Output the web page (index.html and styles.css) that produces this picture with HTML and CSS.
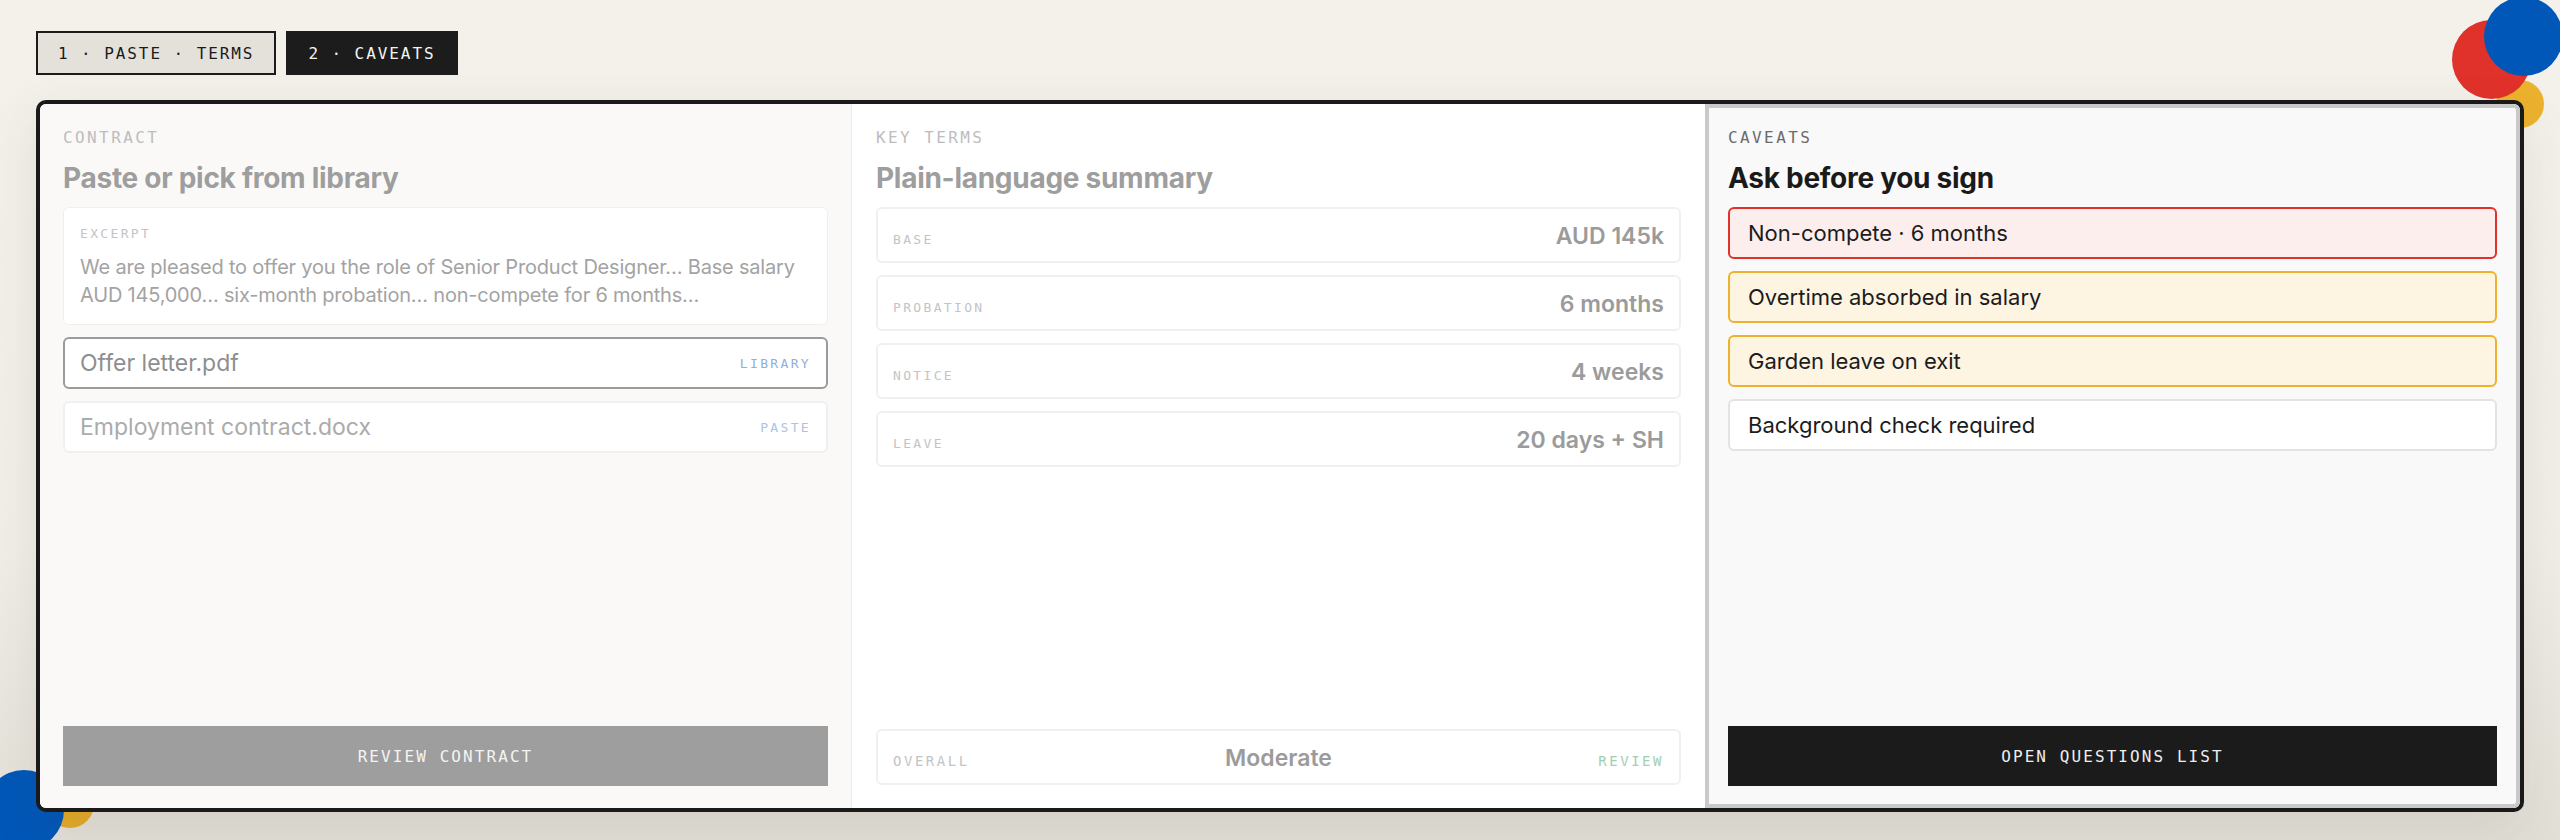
FILE: index.html
```html
<!DOCTYPE html>
<html lang="en">
  <head>
    <meta charset="utf-8">
    <title>Contract review · caveats</title>
    <link rel="stylesheet" href="styles.css">
  </head>
  <body>
    <!-- decorative dots, behind the board -->
    <span class="dot dot-yellow dot-tr-yellow"></span>
    <span class="dot dot-red dot-tr-red"></span>
    <span class="dot dot-blue dot-tr-blue"></span>
    <span class="dot dot-yellow dot-bl-yellow"></span>
    <span class="dot dot-blue dot-bl-blue"></span>

    <nav class="steps">
      <button class="step">1 · PASTE · TERMS</button>
      <button class="step step-current">2 · CAVEATS</button>
    </nav>

    <main class="board">
      <section class="pane pane-contract">
        <div class="eyebrow">CONTRACT</div>
        <h2 class="pane-title">Paste or pick from library</h2>
        <div class="stack">
          <div class="excerpt">
            <div class="tiny-label">EXCERPT</div>
            <p>We are pleased to offer you the role of Senior Product Designer… Base salary<br>AUD 145,000… six-month probation… non-compete for 6 months…</p>
          </div>
          <div class="file file-picked">
            <span>Offer letter.pdf</span>
            <span class="file-src">LIBRARY</span>
          </div>
          <div class="file">
            <span>Employment contract.docx</span>
            <span class="file-src">PASTE</span>
          </div>
        </div>
        <button class="action action-muted">REVIEW CONTRACT</button>
      </section>

      <section class="pane pane-terms">
        <div class="eyebrow">KEY TERMS</div>
        <h2 class="pane-title">Plain-language summary</h2>
        <div class="stack">
          <div class="term"><span class="tiny-label">BASE</span><span class="term-value">AUD 145k</span></div>
          <div class="term"><span class="tiny-label">PROBATION</span><span class="term-value">6 months</span></div>
          <div class="term"><span class="tiny-label">NOTICE</span><span class="term-value">4 weeks</span></div>
          <div class="term"><span class="tiny-label">LEAVE</span><span class="term-value">20 days + SH</span></div>
        </div>
        <div class="term overall">
          <span class="overall-label">OVERALL</span>
          <span class="term-value">Moderate</span>
          <span class="overall-label overall-flag">REVIEW</span>
        </div>
      </section>

      <section class="pane pane-caveats">
        <div class="eyebrow">CAVEATS</div>
        <h2 class="pane-title">Ask before you sign</h2>
        <div class="stack">
          <div class="caveat caveat-high">Non-compete · 6 months</div>
          <div class="caveat caveat-mid">Overtime absorbed in salary</div>
          <div class="caveat caveat-mid">Garden leave on exit</div>
          <div class="caveat caveat-low">Background check required</div>
        </div>
        <button class="action action-dark">OPEN QUESTIONS LIST</button>
      </section>
    </main>
  </body>
</html>
```

FILE: styles.css
```css
body {
  margin: 0;
  height: 100vh;
  box-sizing: border-box;
  position: relative;
  overflow: hidden;
  display: flex;
  flex-direction: column;
  gap: 25px;
  padding: 31px 36px 28px;
  background: linear-gradient(#f4f1eb, #f1eee8 65%, #e2dfd7);
  font-family: Inter, "Liberation Sans", sans-serif;
  color: #1b1b1b;
}

/* dots */
.dot {
  position: absolute;
  border-radius: 50%;
  z-index: 0;
}
.dot-blue { background: #0057b8; }
.dot-red { background: #e0322b; }
.dot-yellow { background: #ecb22e; }
.dot-tr-yellow { left: 2496px; top: 80px; width: 48px; height: 48px; }
.dot-tr-red { left: 2452px; top: 20px; width: 79px; height: 79px; }
.dot-tr-blue { left: 2484px; top: -3px; width: 79px; height: 79px; }
.dot-bl-yellow { left: 46px; top: 780px; width: 48px; height: 48px; background: #e3a92a; }
.dot-bl-blue { left: -16px; top: 770px; width: 80px; height: 80px; }

/* step tabs */
.steps {
  display: flex;
  gap: 10px;
  position: relative;
  z-index: 1;
}
.step {
  height: 44px;
  box-sizing: border-box;
  padding: 0 20px;
  border: 2px solid #1b1b1b;
  background: #e4e1db;
  color: #1b1b1b;
  font: 16px "DejaVu Sans Mono", monospace;
  letter-spacing: 0.12em;
}
.step-current {
  background: #1c1c1c;
  border-color: #1c1c1c;
  color: #f3f3f3;
}

/* board */
.board {
  flex: 1;
  position: relative;
  z-index: 1;
  display: grid;
  grid-template-columns: 812fr 853fr 815fr;
  border: 4px solid #1a1a1a;
  border-radius: 10px;
  overflow: hidden;
  background: #fff;
  box-shadow: 0 18px 50px rgba(70, 60, 40, 0.1);
}
.pane {
  display: flex;
  flex-direction: column;
  min-width: 0;
  padding: 24px 23px 22px;
}
.pane-contract {
  background: #faf9f7;
  border-right: 1px solid #ececec;
}
.pane-terms {
  background: #fff;
  padding: 24px 24px 23px;
}
.pane-caveats {
  background: #f9f9f9;
  border: 4px solid #c9c9c9;
  border-radius: 0 6px 6px 0;
  padding: 20px 19px 18px;
}

.eyebrow {
  font: 16px/20px "DejaVu Sans Mono", monospace;
  letter-spacing: 0.15em;
  color: #bdbdbd;
  margin-bottom: 12px;
}
.pane-caveats .eyebrow {
  color: #6b6b6b;
}
.pane-title {
  margin: 0 0 11px;
  font-size: 28px;
  line-height: 36px;
  font-weight: 700;
  letter-spacing: -0.01em;
  color: #9e9e9e;
}
.pane-caveats .pane-title {
  color: #1a1a1a;
}

.stack {
  display: flex;
  flex-direction: column;
  gap: 12px;
}
.tiny-label {
  font: 13px/16px "DejaVu Sans Mono", monospace;
  letter-spacing: 0.18em;
  color: #c4c4c4;
}

/* contract pane */
.excerpt {
  background: #fff;
  border: 1px solid #efefef;
  border-radius: 6px;
  padding: 18px 16px 15px;
}
.excerpt .tiny-label {
  margin-bottom: 11px;
}
.excerpt p {
  margin: 0;
  font-size: 20px;
  line-height: 28px;
  letter-spacing: -0.01em;
  color: #a3a3a3;
}
.file {
  height: 52px;
  box-sizing: border-box;
  display: flex;
  align-items: center;
  justify-content: space-between;
  padding: 0 15px;
  border: 2px solid #f0f0f0;
  border-radius: 6px;
  background: #fff;
  font-size: 23px;
  color: #ababab;
}
.file-picked {
  border-color: #9b9b9b;
  color: #8e8e8e;
}
.file-src {
  font: 13px "DejaVu Sans Mono", monospace;
  letter-spacing: 0.18em;
  color: #a9c4e6;
}
.file-picked .file-src {
  color: #8fb0d8;
}

/* terms pane */
.term {
  height: 56px;
  box-sizing: border-box;
  display: flex;
  align-items: baseline;
  justify-content: space-between;
  padding: 13px 15px 0;
  border: 2px solid #f0f0f0;
  border-radius: 6px;
  background: #fff;
}
.term-value {
  font-size: 23px;
  line-height: 28px;
  font-weight: 600;
  color: #9b9b9b;
}
.overall {
  margin-top: auto;
}
.overall-label {
  font: 14px "DejaVu Sans Mono", monospace;
  letter-spacing: 0.18em;
  color: #c4c4c4;
  width: 120px;
}
.overall-flag {
  color: #a4ceb0;
  text-align: right;
}

/* caveats pane */
.caveat {
  height: 52px;
  box-sizing: border-box;
  display: flex;
  align-items: center;
  padding: 0 18px;
  border: 2px solid #e3e3e3;
  border-radius: 6px;
  background: #fff;
  font-size: 22px;
  color: #1c1c1c;
}
.caveat-high {
  border-color: #e0322b;
  background: #fdeeee;
}
.caveat-mid {
  border-color: #edb32e;
  background: #fdf4e2;
}

/* bottom buttons */
.action {
  margin-top: auto;
  height: 60px;
  border: 0;
  font: 16px "DejaVu Sans Mono", monospace;
  letter-spacing: 0.13em;
  color: #f4f4f4;
  background: #9e9e9e;
}
.action-dark {
  background: #1b1b1b;
  color: #eeeeee;
}
```
